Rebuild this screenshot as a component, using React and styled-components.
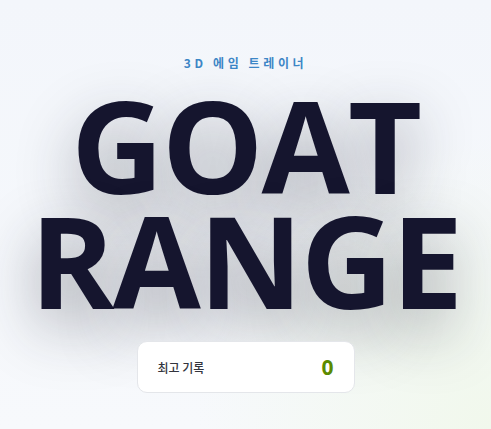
import styled, { createGlobalStyle } from 'styled-components';

const Global = createGlobalStyle`
  html, body { margin: 0; padding: 0; }
  body {
    width: 491px;
    height: 429px;
    overflow: hidden;
    font-family: "Open Sans", "Noto Sans CJK KR", sans-serif;
  }
`;

const Screen = styled.div`
  width: 491px;
  height: 429px;
  display: flex;
  flex-direction: column;
  align-items: center;
  background:
    radial-gradient(circle at 100% 100%, #f1f8ec 0%, rgba(241, 248, 236, 0) 45%),
    linear-gradient(180deg, #f3f6fb 0%, #f7f9fc 100%);
`;

const Kicker = styled.div`
  margin-top: 54px;
  font-size: 12px;
  font-weight: 700;
  letter-spacing: 0.3em;
  color: #3d86c6;
  font-family: "Noto Sans CJK KR", sans-serif;
`;

const Title = styled.h1`
  margin: 16px 0 0;
  font-family: "Open Sans", sans-serif;
  font-size: 128px;
  font-weight: 700;
  line-height: 115px;
  letter-spacing: -2px;
  text-align: center;
  color: #15152e;
  text-shadow: 0 22px 60px rgba(30, 34, 48, 0.42);
`;

const Card = styled.div`
  margin-top: 24px;
  width: 218px;
  height: 52px;
  box-sizing: border-box;
  padding: 0 20px;
  display: flex;
  align-items: center;
  justify-content: space-between;
  background: #fff;
  border: 1px solid #e4e6ea;
  border-radius: 10px;
`;

const Label = styled.span`
  font-family: "Noto Sans CJK KR", sans-serif;
  font-size: 12px;
  font-weight: 500;
  color: #33343d;
`;

const Score = styled.span`
  font-family: "Open Sans", sans-serif;
  font-size: 21px;
  font-weight: 700;
  color: #5b8a00;
`;

export default function App() {
  return (
    <>
      <Global />
      <Screen>
        <Kicker>3D 에임 트레이너</Kicker>
        <Title>GOAT<br />RANGE</Title>
        <Card>
          <Label>최고 기록</Label>
          <Score>0</Score>
        </Card>
      </Screen>
    </>
  );
}
